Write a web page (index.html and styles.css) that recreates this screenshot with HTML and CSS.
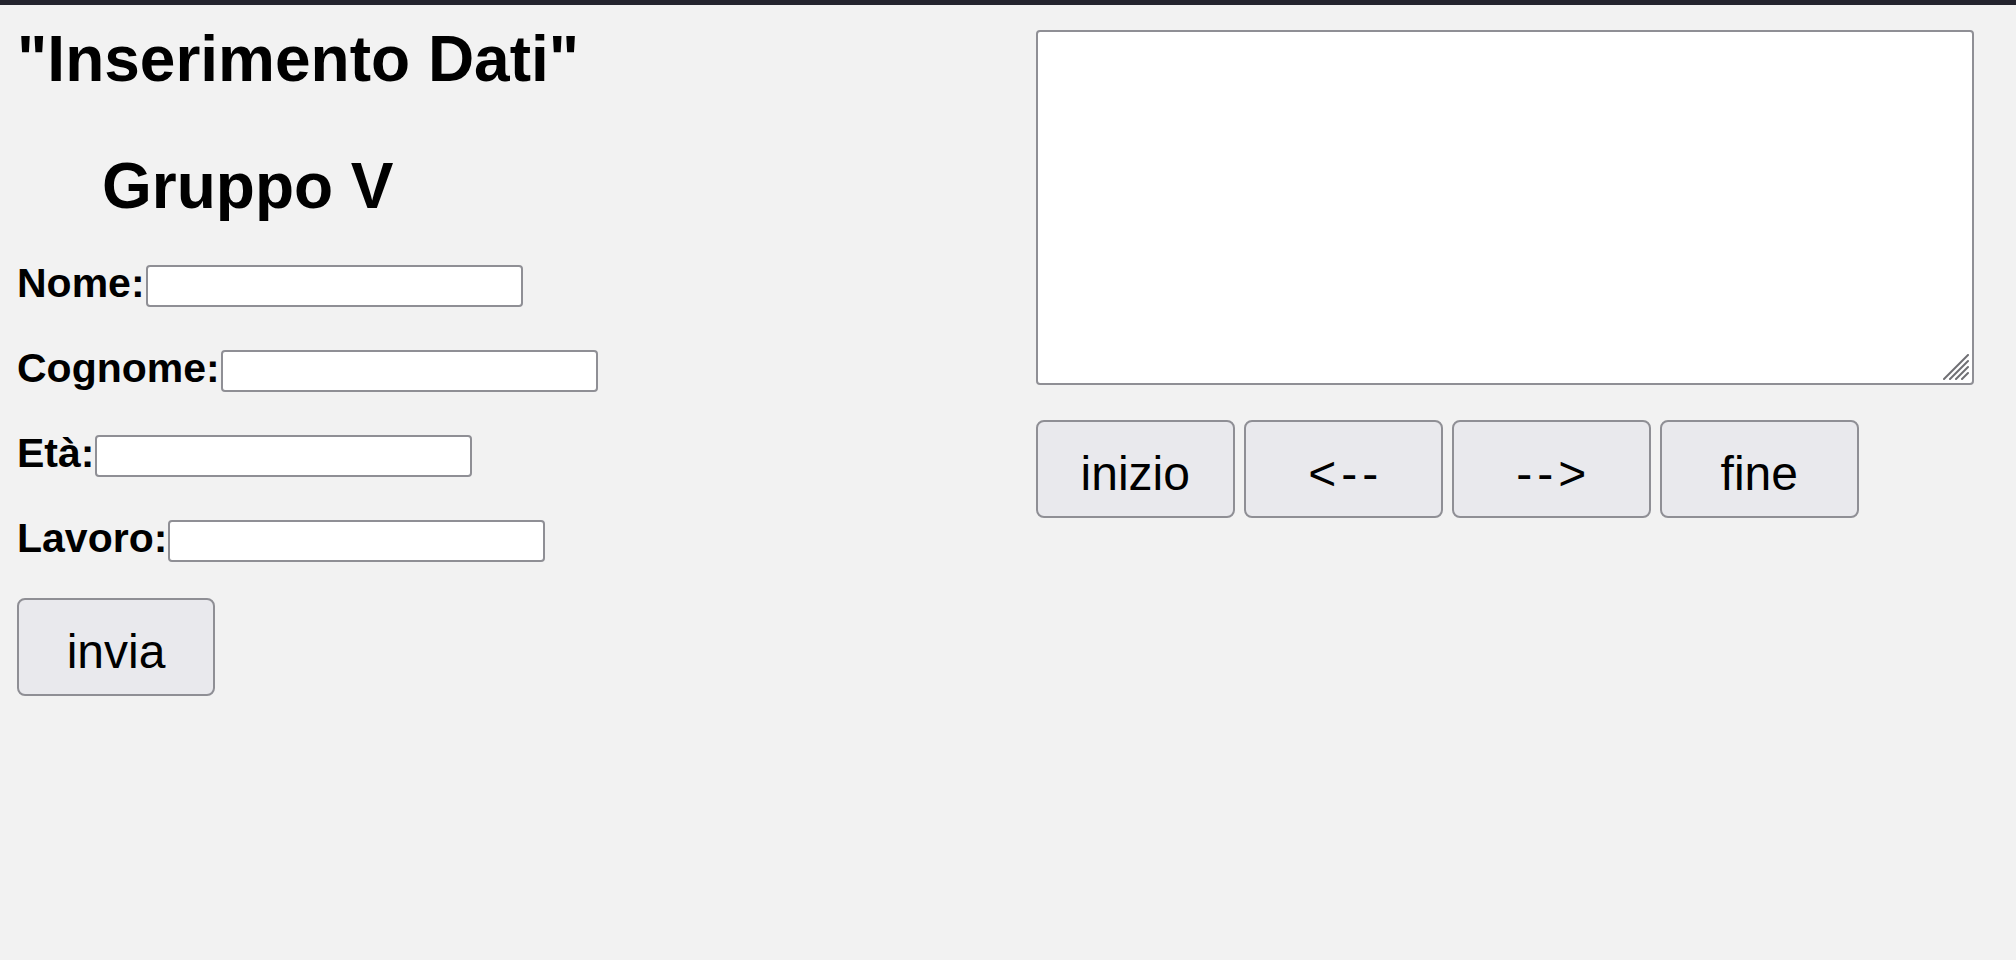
FILE: index.html
```html
<!DOCTYPE html>
<html lang="it">
<head>
<meta charset="utf-8">
<title>Inserimento Dati</title>
<link rel="stylesheet" href="styles.css">
</head>
<body>
<div class="topbar"></div>
<main class="page">
  <section class="left">
    <h1 class="title">"Inserimento Dati"</h1>
    <h1 class="group">Gruppo V</h1>
    <form class="form">
      <div class="row"><label class="lbl" for="nome">Nome:</label><input class="field" id="nome" type="text"></div>
      <div class="row"><label class="lbl" for="cognome">Cognome:</label><input class="field" id="cognome" type="text"></div>
      <div class="row"><label class="lbl" for="eta">Età:</label><input class="field" id="eta" type="text"></div>
      <div class="row"><label class="lbl" for="lavoro">Lavoro:</label><input class="field" id="lavoro" type="text"></div>
      <button class="btn send" type="button">invia</button>
    </form>
  </section>
  <section class="right">
    <div class="area-wrap">
      <textarea class="area"></textarea>
      <svg class="grip" width="26" height="26" viewBox="0 0 26 26" aria-hidden="true">
        <g stroke="#6f6f73" stroke-width="2" stroke-linecap="round">
          <line x1="1" y1="25" x2="25" y2="1"/>
          <line x1="7" y1="25" x2="25" y2="7"/>
          <line x1="13" y1="25" x2="25" y2="13"/>
          <line x1="19" y1="25" x2="25" y2="19"/>
        </g>
      </svg>
    </div>
    <div class="nav">
      <button class="btn nav-btn" type="button">inizio</button>
      <button class="btn nav-btn arrow" type="button">&lt;--</button>
      <button class="btn nav-btn arrow" type="button">--&gt;</button>
      <button class="btn nav-btn" type="button">fine</button>
    </div>
  </section>
</main>
</body>
</html>
```
FILE: styles.css
```css
html, body {
  margin: 0;
  padding: 0;
}
body {
  background: #f2f2f2;
  color: #000;
  font-family: "Liberation Sans", Arial, Helvetica, sans-serif;
  width: 2016px;
  height: 960px;
  overflow: hidden;
}
.topbar {
  height: 5px;
  background: #24242e;
}
.page {
  display: flex;
  align-items: flex-start;
}
.left {
  width: 1036px;
  box-sizing: border-box;
  padding: 17px 0 0 17px;
  flex: none;
}
.title,
.group {
  margin: 0;
  font-size: 64px;
  line-height: 74px;
  font-weight: bold;
}
.title {
  margin-bottom: 53px;
}
.group {
  padding-left: 85px;
  margin-bottom: 36px;
}
.form {
  display: flex;
  flex-direction: column;
  align-items: flex-start;
  gap: 37px;
  margin: 0;
}
.row {
  display: flex;
  align-items: flex-end;
  gap: 1px;
}
.lbl {
  font-size: 41px;
  line-height: 48px;
  font-weight: bold;
}
.field {
  box-sizing: border-box;
  width: 377px;
  height: 42px;
  margin: 0;
  padding: 0 6px;
  border: 2px solid #8f8f95;
  border-radius: 4px;
  background: #fff;
  font-family: inherit;
  font-size: 26px;
}
.btn {
  box-sizing: border-box;
  height: 98px;
  margin: 0;
  padding: 10px 0 0;
  border: 2px solid #8f8f95;
  border-radius: 8px;
  background: #e9e9ed;
  color: #000;
  font-family: "Liberation Sans", Arial, Helvetica, sans-serif;
  font-size: 48px;
  line-height: 1;
  -webkit-appearance: none;
  appearance: none;
}
.send {
  width: 198px;
  margin-top: -1px;
}
.right {
  flex: none;
  padding-top: 25px;
}
.area-wrap {
  position: relative;
  width: 938px;
  height: 355px;
}
.area {
  display: block;
  box-sizing: border-box;
  width: 938px;
  height: 355px;
  margin: 0;
  border: 2px solid #8f8f95;
  border-radius: 4px;
  background: #fff;
  resize: none;
}
.grip {
  position: absolute;
  right: 5px;
  bottom: 5px;
}
.nav {
  display: flex;
  gap: 9.5px;
  margin-top: 35px;
}
.nav-btn {
  width: 198.5px;
}
.arrow {
  letter-spacing: 5px;
  padding-left: 5px;
}
```
